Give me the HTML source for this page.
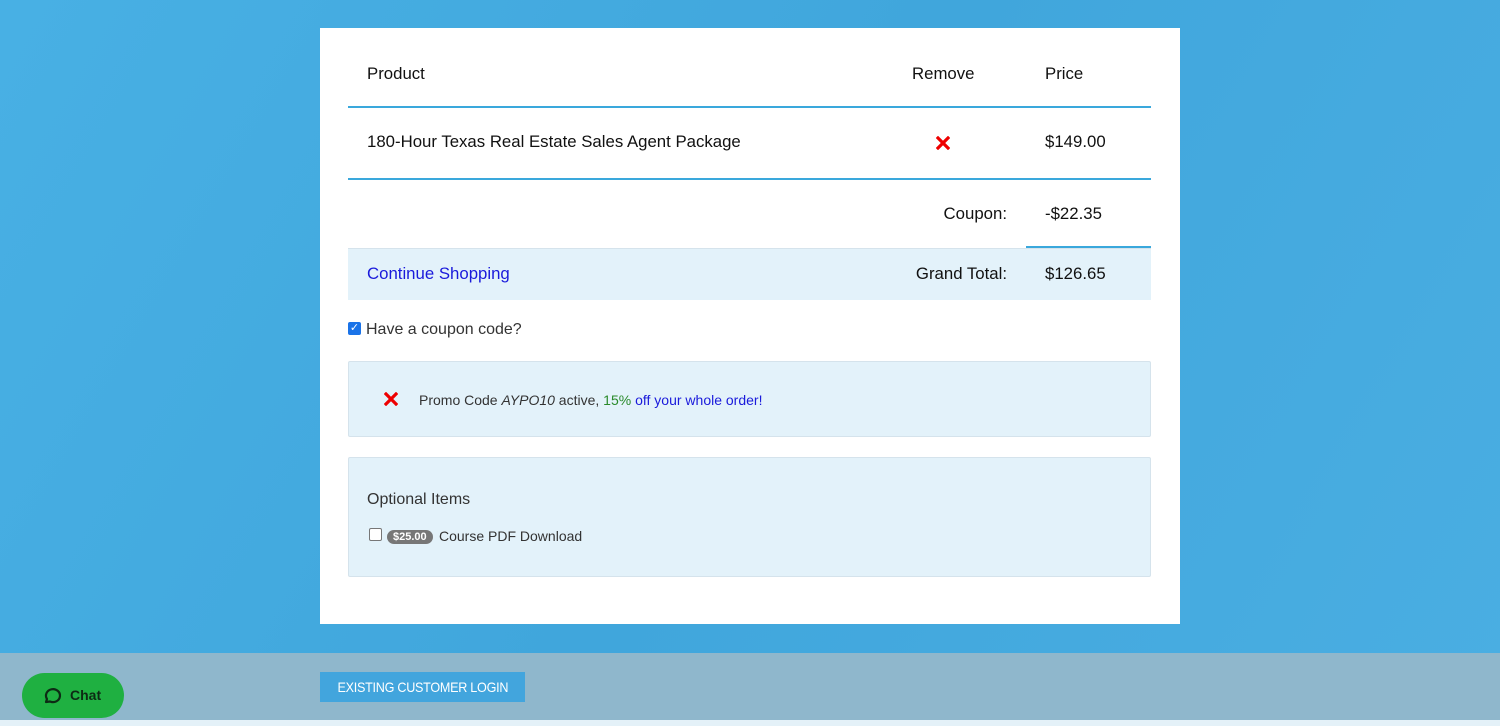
<!DOCTYPE html>
<html><head><style>
body{margin:0;width:1500px;height:726px;overflow:hidden;background:linear-gradient(120deg,#48b0e4 0%,#40a6dc 50%,#4aaee2 100%);font-family:"Liberation Sans",sans-serif;position:relative}
.card{position:absolute;left:320px;top:28px;width:860px;height:596px;background:#fff}
.t{position:absolute;font-size:16.8px;color:#111}
.r{position:absolute;font-size:16.8px;color:#111;right:173px;text-align:right}
.line{position:absolute;height:2px;background:#3aa8dc}
.box{position:absolute;left:28px;width:801px;background:#e3f2fa;border:1px solid #d5e3ec;border-radius:2px}
.foot{position:absolute;left:0;top:653px;width:1500px;height:67px;background:#8fb7cc}
.bot{position:absolute;left:0;top:720px;width:1500px;height:6px;background:#e4f1f8}
</style></head><body>
<div class="card">
<div class="t" style="left:47px;top:36px">Product</div>
<div class="t" style="left:592px;top:36px">Remove</div>
<div class="t" style="left:725px;top:36px">Price</div>
<div class="line" style="left:28px;top:78px;width:803px"></div>
<div class="t" style="left:47px;top:104px">180-Hour Texas Real Estate Sales Agent Package</div>
<svg style="position:absolute;left:616px;top:108px" width="14" height="14" viewBox="0 0 14 14"><path d="M2 2L12 12M12 2L2 12" stroke="#e00" stroke-width="3.2" stroke-linecap="square"/></svg>
<div class="t" style="left:725px;top:104px">$149.00</div>
<div class="line" style="left:28px;top:150px;width:803px"></div>
<div class="r" style="top:176px">Coupon:</div>
<div class="t" style="left:725px;top:176px">-$22.35</div>
<div class="line" style="left:706px;top:218px;width:125px"></div>
<div style="position:absolute;left:28px;top:220px;width:803px;height:51px;background:#e3f2fa;border-top:1px solid #d5e3ec"></div>
<div class="t" style="left:47px;top:236px;color:#1a1adb">Continue Shopping</div>
<div class="r" style="top:236px">Grand Total:</div>
<div class="t" style="left:725px;top:236px">$126.65</div>
<div style="position:absolute;left:28px;top:294px;width:13px;height:13px;background:#1a73e8;border-radius:2px;color:#fff;font-size:11px;line-height:13px;text-align:center">✓</div>
<div class="t" style="left:46px;top:293px;font-size:16px;color:#333">Have a coupon code?</div>
<div class="box" style="top:333px;height:74px">
<svg style="position:absolute;left:35px;top:30px" width="14" height="14" viewBox="0 0 14 14"><path d="M2 2L12 12M12 2L2 12" stroke="#e00" stroke-width="3.2" stroke-linecap="square"/></svg>
<div style="position:absolute;left:70px;top:30px;font-size:14px;color:#333">Promo Code <i>AYPO10</i> active, <span style="color:#2a8a2a">15%</span> <span style="color:#1a1adb">off your whole order!</span></div>
</div>
<div class="box" style="top:429px;height:118px">
<div style="position:absolute;left:18px;top:33px;font-size:16px;color:#333">Optional Items</div>
<div style="position:absolute;left:20px;top:70px;width:11px;height:11px;border:1px solid #777;border-radius:2px;background:#fff"></div>
<div style="position:absolute;left:38px;top:72px;background:#777;color:#fff;font-size:11px;font-weight:bold;padding:1px 6px;border-radius:8px">$25.00</div>
<div style="position:absolute;left:90px;top:70px;font-size:14px;color:#333">Course PDF Download</div>
</div>
</div>
<div class="foot"></div><div class="bot"></div>
<div style="position:absolute;left:320px;top:672px;width:205px;height:30px;background:#42a5dd;display:flex;align-items:center;justify-content:center"><span style="color:#fff;font-size:14px;display:inline-block;transform:scaleX(0.9);letter-spacing:-0.3px;white-space:nowrap">EXISTING CUSTOMER LOGIN</span></div>
<div style="position:absolute;left:22px;top:673px;width:102px;height:45px;background:#1fb041;border-radius:23px">
<svg style="position:absolute;left:20px;top:13px" width="20" height="20" viewBox="0 0 20 20"><path d="M4 16 L5 13 A7 6.5 0 1 1 8 15.5 Z" fill="none" stroke="#0d2a14" stroke-width="2.2" stroke-linejoin="round"/></svg>
<div style="position:absolute;left:48px;top:14px;font-size:14px;font-weight:bold;color:#0d2a14">Chat</div>
</div>
</body></html>
